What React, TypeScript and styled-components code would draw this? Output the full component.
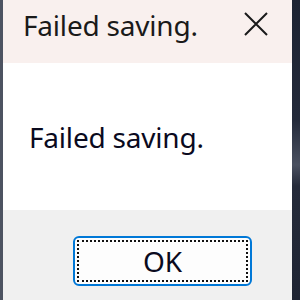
import React from "react";
import styled, { createGlobalStyle } from "styled-components";

const Global = createGlobalStyle`
  html, body { margin: 0; padding: 0; }
  body {
    width: 300px;
    height: 300px;
    overflow: hidden;
    background: #1f2534;
    font-family: "Noto Sans", "Open Sans", sans-serif;
  }
`;

const Desktop = styled.div`
  display: flex;
  width: 300px;
  height: 300px;
`;

const LeftEdge = styled.div`
  width: 3px;
  flex: none;
  background: #4d5361;
`;

const Dialog = styled.div`
  width: 289px;
  height: 300px;
  flex: none;
  display: flex;
  flex-direction: column;
  box-shadow: 1px 0 0 #8a8f99;
`;

const RightEdge = styled.div`
  flex: 1;
  background: linear-gradient(180deg, #1d2332 0%, #232a3a 40%, #4a5060 55%, #252b3a 62%, #1e2433 100%);
`;

const TitleBar = styled.div`
  height: 63px;
  flex: none;
  background: #f9f0ee;
  display: flex;
  align-items: flex-start;
  justify-content: space-between;
  padding-left: 20px;
  box-sizing: border-box;
`;

const TitleText = styled.div`
  font-size: 28px;
  line-height: 28px;
  margin-top: 11px;
  color: #1a1a1a;
  letter-spacing: -0.2px;
`;

const CloseButton = styled.div`
  width: 24px;
  height: 24px;
  margin-top: 12px;
  margin-right: 24px;
  display: flex;
`;

const Body = styled.div`
  height: 147px;
  flex: none;
  background: #ffffff;
  padding-left: 26px;
  box-sizing: border-box;
`;

const Message = styled.div`
  font-size: 28px;
  line-height: 28px;
  padding-top: 60px;
  color: #0a0a1e;
  letter-spacing: -0.2px;
`;

const Footer = styled.div`
  flex: 1;
  background: #f0f0f0;
  padding-left: 70px;
  padding-top: 26px;
  box-sizing: border-box;
`;

const OkButton = styled.div`
  width: 179px;
  height: 50px;
  box-sizing: border-box;
  border: 2px solid #0078d7;
  border-radius: 6px;
  background: #fdfdfd;
  padding: 2px;
  display: flex;
`;

const FocusRing = styled.div`
  flex: 1;
  border: 2px dotted #111;
  display: flex;
  align-items: center;
  justify-content: center;
  font-size: 28px;
  line-height: 28px;
  color: #0a0a1e;
`;

export default function App() {
  return (
    <>
      <Global />
      <Desktop>
        <LeftEdge />
        <Dialog>
          <TitleBar>
            <TitleText>Failed saving.</TitleText>
            <CloseButton>
              <svg width="24" height="24" viewBox="0 0 24 24">
                <path d="M1 1 L23 23 M23 1 L1 23" stroke="#1a1a1a" strokeWidth="2" fill="none" />
              </svg>
            </CloseButton>
          </TitleBar>
          <Body>
            <Message>Failed saving.</Message>
          </Body>
          <Footer>
            <OkButton>
              <FocusRing>OK</FocusRing>
            </OkButton>
          </Footer>
        </Dialog>
        <RightEdge />
      </Desktop>
    </>
  );
}
